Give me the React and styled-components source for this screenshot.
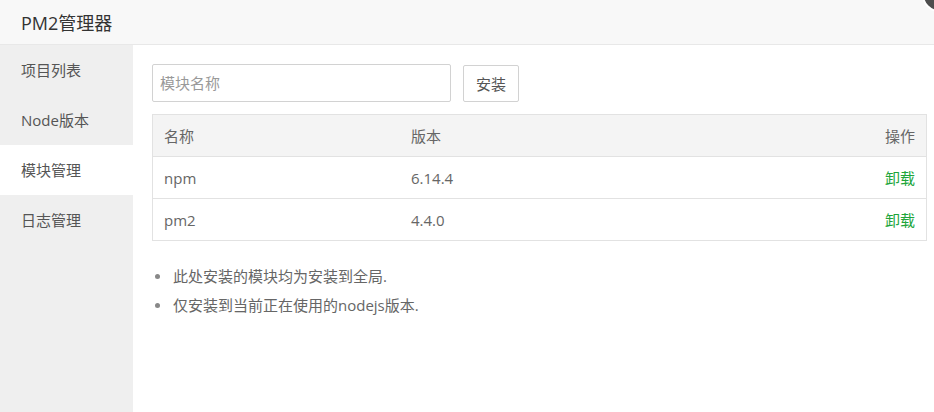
import styled, { createGlobalStyle } from "styled-components";

const GlobalStyle = createGlobalStyle`
  html, body {
    margin: 0;
    padding: 0;
    background: #fff;
  }
  body {
    font-family: "Open Sans", "Noto Sans CJK SC", sans-serif;
    font-size: 15px;
    color: #555;
  }
`;

const Layer = styled.div`
  position: relative;
  width: 934px;
  height: 412px;
  overflow: hidden;
  display: flex;
  flex-direction: column;
`;

const Titulo = styled.div`
  height: 45px;
  flex: none;
  box-sizing: border-box;
  padding-left: 21px;
  display: flex;
  align-items: center;
  background-color: #f8f8f8;
  border-bottom: 1px solid #e8e8e8;
  font-size: 18px;
  color: #333;
`;

const BtnFechar = styled.span`
  position: absolute;
  top: -22px;
  right: -22px;
  width: 30px;
  height: 30px;
  border-radius: 50%;
  background-color: #4e4e4e;
  border: 2px solid #fff;
`;

const Corpo = styled.div`
  flex: 1;
  display: flex;
`;

const Menu = styled.ul`
  width: 133px;
  flex: none;
  margin: 0;
  padding: 0;
  list-style: none;
  background-color: #efefef;
`;

const ItemMenu = styled.li`
  height: 50px;
  line-height: 50px;
  padding-left: 21px;
  font-size: 15px;
  color: #555;
  background-color: ${(p) => (p.$ativo ? "#fff" : "transparent")};
`;

const Conteudo = styled.div`
  flex: 1;
  padding: 19px 8px 0 19px;
`;

const LinhaForm = styled.div`
  display: flex;
  align-items: center;
  gap: 12px;
  margin-bottom: 12px;
`;

const Input = styled.input`
  width: 299px;
  height: 38px;
  box-sizing: border-box;
  padding: 0 7px;
  border: 1px solid #d2d2d2;
  border-radius: 2px;
  font-family: inherit;
  font-size: 15px;
  color: #555;

  &::placeholder {
    color: #999;
  }
`;

const BtnInstalar = styled.button`
  height: 37px;
  padding: 0 12px;
  background-color: #fff;
  border: 1px solid #d2d2d2;
  border-radius: 2px;
  font-family: inherit;
  font-size: 15px;
  color: #555;
`;

const Tabela = styled.table`
  width: 775px;
  border-collapse: collapse;
  border: 1px solid #e2e2e2;
  font-size: 15px;
  color: #666;
`;

const Cel = styled.td`
  height: 41px;
  padding: 0 11px;
  border-top: 1px solid #e2e2e2;
  text-align: ${(p) => (p.$direita ? "right" : "left")};
`;

const CelCab = styled.th`
  height: 41px;
  padding: 0 11px;
  font-weight: normal;
  background-color: #f4f4f4;
  text-align: ${(p) => (p.$direita ? "right" : "left")};
`;

const Desinstalar = styled.a`
  color: #20a53a;
  text-decoration: none;
`;

const Notas = styled.ul`
  margin: 21px 0 0;
  padding: 0;
  list-style: none;
  font-size: 15px;
  color: #666;
`;

const Nota = styled.li`
  display: flex;
  align-items: center;
  padding-left: 3px;
  line-height: 29px;

  &::before {
    content: "";
    width: 5px;
    height: 5px;
    margin-right: 13px;
    border-radius: 50%;
    background-color: #888;
  }
`;

const modulos = [
  { nome: "npm", versao: "6.14.4" },
  { nome: "pm2", versao: "4.4.0" },
];

function App() {
  return (
    <>
      <GlobalStyle />
      <Layer>
        <Titulo>PM2管理器</Titulo>
        <BtnFechar />
        <Corpo>
          <Menu>
            <ItemMenu>项目列表</ItemMenu>
            <ItemMenu>Node版本</ItemMenu>
            <ItemMenu $ativo>模块管理</ItemMenu>
            <ItemMenu>日志管理</ItemMenu>
          </Menu>
          <Conteudo>
            <LinhaForm>
              <Input type="text" placeholder="模块名称" />
              <BtnInstalar>安装</BtnInstalar>
            </LinhaForm>
            <Tabela>
              <thead>
                <tr>
                  <CelCab style={{ width: 225 }}>名称</CelCab>
                  <CelCab>版本</CelCab>
                  <CelCab $direita>操作</CelCab>
                </tr>
              </thead>
              <tbody>
                {modulos.map((m) => (
                  <tr key={m.nome}>
                    <Cel>{m.nome}</Cel>
                    <Cel>{m.versao}</Cel>
                    <Cel $direita>
                      <Desinstalar href="#">卸载</Desinstalar>
                    </Cel>
                  </tr>
                ))}
              </tbody>
            </Tabela>
            <Notas>
              <Nota>此处安装的模块均为安装到全局.</Nota>
              <Nota>仅安装到当前正在使用的nodejs版本.</Nota>
            </Notas>
          </Conteudo>
        </Corpo>
      </Layer>
    </>
  );
}

export default App;
